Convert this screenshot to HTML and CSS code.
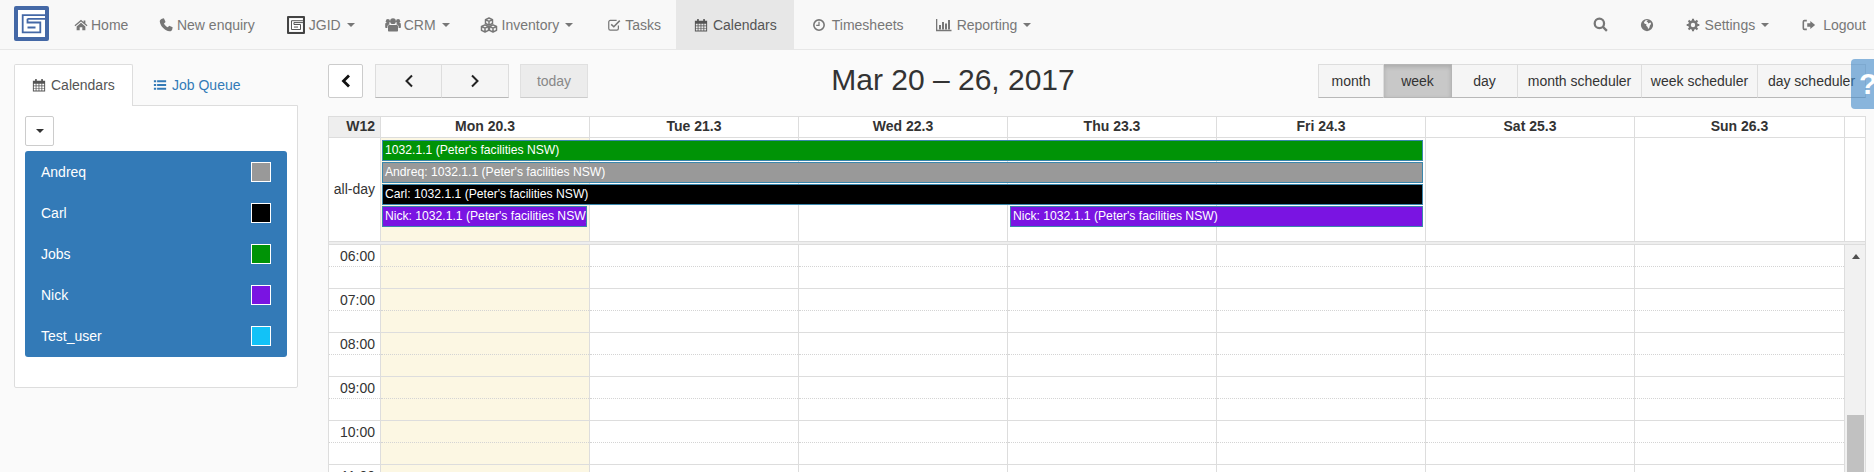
FILE: index.html
```html
<!DOCTYPE html>
<html lang="en">
<head>
<meta charset="utf-8">
<title>Calendars</title>
<link rel="stylesheet" href="styles.css">
</head>
<body>
<svg class="defs" xmlns="http://www.w3.org/2000/svg">
  <symbol id="i-home" viewBox="0 0 16 16"><path d="M8 2 .6 8.3l.9 1L8 3.9l6.500 5.400.9-1L13 6.200V2.800h-2v1.700z"/><path d="M3 9.600 8 5.500l5 4.100V14H9.500v-3.500h-3V14H3z"/></symbol>
  <symbol id="i-phone" viewBox="0 0 16 16"><path d="M3.400.8 5.600.3 7.500 4.600 5.700 6.200C6.500 8 8.300 9.900 10.100 10.600l1.500-1.700 4 1.800-.5 2.500c-.4 1.500-1.700 2.200-3 2-5.500-.8-10.200-5.500-11.200-11C.7 2.700 1.800 1.300 3.400.8z"/></symbol>
  <symbol id="i-users" viewBox="0 0 16 16"><circle cx="8" cy="4.200" r="2.900"/><circle cx="2.900" cy="4.200" r="2.100"/><circle cx="13.100" cy="4.200" r="2.100"/><path d="M4.300 8h7.400c.8 0 1.300.6 1.300 1.400V13.500c0 .6-.4 1-1 1H4c-.6 0-1-.4-1-1V9.400C3 8.600 3.500 8 4.300 8z"/><path d="M.2 7c0-.6.5-.9 1-.9h2.900c.2.5.5.8.8 1.100-1.200.2-2.500.9-2.500 2.300v1.500H1c-.5 0-.8-.3-.8-.8zM15.800 7c0-.6-.5-.9-1-.9h-2.900c-.2.500-.5.800-.8 1.100 1.200.2 2.500.9 2.500 2.300v1.500h1.500c.5 0 .8-.3.800-.8z"/></symbol>
  <symbol id="i-cubes" viewBox="0 0 18 16"><path class="cube" d="M9 1 12.500 2.700V6.500L9 8.200 5.500 6.500V2.700zM5.500 2.700 9 4.400l3.500-1.700M9 4.400v3.800"/><path class="cube" d="M5 7.800 8.500 9.500v3.800L5 15 1.500 13.300V9.500zM1.500 9.500 5 11.200l3.500-1.700M5 11.200V15"/><path class="cube" d="M13 7.800 16.500 9.500v3.800L13 15 9.500 13.300V9.500zM9.500 9.500 13 11.200l3.500-1.700M13 11.200V15"/></symbol>
  <symbol id="i-check" viewBox="0 0 16 16"><path class="line" d="M13 8.500V12a1.800 1.800 0 0 1-1.800 1.800H3.800A1.800 1.800 0 0 1 2 12V4.500a1.800 1.800 0 0 1 1.800-1.800H11"/><path class="line heavy" d="M4.800 7.200 7.800 10 14.600 3"/></symbol>
  <symbol id="i-cal" viewBox="0 0 16 16"><path d="M1 3h14v12.500H1zm1.100 3.600v1.900H4.200V6.600zm3 0v1.900h2.400V6.600zm3.300 0v1.900h2.400V6.600zm3.300 0v1.900h2.200V6.600zM2.100 9.300v2h2.100v-2zm3 0v2h2.400v-2zm3.300 0v2h2.400v-2zm3.300 0v2h2.200v-2zM2.100 12.100v2.300H4.200v-2.300zm3 0v2.300h2.400v-2.300zm3.300 0v2.300h2.400v-2.300zm3.300 0v2.300h2.200v-2.300z" fill-rule="evenodd"/><rect x="3.500" y="1" width="2" height="3.500" rx=".6"/><rect x="10.500" y="1" width="2" height="3.500" rx=".6"/></symbol>
  <symbol id="i-clock" viewBox="0 0 16 16"><circle class="line heavy" cx="8" cy="8" r="5.900"/><path class="line" d="M8 4.200V8.500H4.800"/></symbol>
  <symbol id="i-chart" viewBox="0 0 16 16"><path class="line" d="M.6 2v11.500H15.500"/><path d="M3 8h2v4.500H3zM6 5h2v7.500H6zM9 6.500h2v6H9zM12 3h2v9.500h-2z"/></symbol>
  <symbol id="i-search" viewBox="0 0 16 16"><circle class="line thick" cx="6.800" cy="6.800" r="5"/><path class="line thick" d="M10.300 10.300 14.800 14.800"/></symbol>
  <symbol id="i-globe" viewBox="0 0 16 16"><path fill-rule="evenodd" d="M8 1a7 7 0 1 1 0 14A7 7 0 0 1 8 1zm1 1.600L7.500 4.300l1.500.6.300 1.500 2-1 1-.2.300 1.600-1.300 1.800-.6 2.500-1.500 1.400-.5-2.300-1.600-1.400.3-1.600-2.100-.6-.8-1.700L6.500 2.500z"/></symbol>
  <symbol id="i-cog" viewBox="0 0 16 16"><circle class="line cogring" cx="8" cy="8" r="4"/><path class="line cogteeth" d="M8 .8v2.600M8 12.600v2.600M.8 8h2.600M12.600 8h2.600M2.900 2.900l1.900 1.900M11.200 11.200l1.900 1.900M2.900 13.100l1.900-1.900M11.200 4.800l1.900-1.900"/></symbol>
  <symbol id="i-logout" viewBox="0 0 16 16"><path class="line heavy" d="M5.500 3H2.800C2 3 1.500 3.500 1.500 4.300v7.400c0 .8.500 1.300 1.300 1.300h2.700"/><path d="M6 6h3.500V3.300L15 8l-5.500 4.700V10H6z"/></symbol>
  <symbol id="i-list" viewBox="0 0 16 16"><path d="M1 2.500h2.600v2.400H1zM4.700 2.500H15v2.400H4.700zM1 6.800h2.600v2.400H1zM4.700 6.800H15v2.400H4.700zM1 11.100h2.600v2.400H1zM4.700 11.100H15v2.400H4.700z"/></symbol>
  <symbol id="i-logo" viewBox="0 0 35 35"><rect class="logo-bg" width="35" height="35" rx="2"/><rect class="logo-in" x="4" y="4" width="27" height="27"/><path class="logo-line" d="M31 9.200H8.700V26.300H26.300V16.500H13.500V12.800M31 12.800H13.500M13.500 21.500H21.500"/></symbol>
</svg>

<nav class="navbar">
  <span class="brand"><svg class="logo"><use href="#i-logo"/></svg></span>
  <ul class="nav-items">
    <li class="nav-item nav-home"><svg class="ic ic-home"><use href="#i-home"/></svg>Home</li>
    <li class="nav-item nav-enq"><svg class="ic ic-phone"><use href="#i-phone"/></svg>New enquiry</li>
    <li class="nav-item"><svg class="ic ic-jgid"><use href="#i-logo"/></svg>JGID<span class="caret"></span></li>
    <li class="nav-item"><svg class="ic ic-users"><use href="#i-users"/></svg>CRM<span class="caret"></span></li>
    <li class="nav-item"><svg class="ic ic-cubes"><use href="#i-cubes"/></svg>Inventory<span class="caret"></span></li>
    <li class="nav-item nav-tasks"><svg class="ic ic-check"><use href="#i-check"/></svg>Tasks</li>
    <li class="nav-item active"><svg class="ic ic-cal"><use href="#i-cal"/></svg>Calendars</li>
    <li class="nav-item nav-time"><svg class="ic ic-clock"><use href="#i-clock"/></svg>Timesheets</li>
    <li class="nav-item nav-report"><svg class="ic ic-chart"><use href="#i-chart"/></svg>Reporting<span class="caret"></span></li>
  </ul>
  <ul class="nav-items nav-right">
    <li class="nav-item"><svg class="ic ic-search"><use href="#i-search"/></svg></li>
    <li class="nav-item nav-globe"><svg class="ic ic-globe"><use href="#i-globe"/></svg></li>
    <li class="nav-item nav-settings"><svg class="ic ic-cog"><use href="#i-cog"/></svg>Settings<span class="caret"></span></li>
    <li class="nav-item nav-logout"><svg class="ic ic-logout"><use href="#i-logout"/></svg>Logout</li>
  </ul>
</nav>

<main class="main">
  <aside class="sidebar">
    <div class="tabs">
      <div class="tab tab-on"><svg class="ic ic-cal"><use href="#i-cal"/></svg>Calendars</div>
      <div class="tab"><svg class="ic ic-list"><use href="#i-list"/></svg>Job Queue</div>
    </div>
    <div class="tab-panel">
      <button class="small-btn"><span class="caret caret-dark"></span></button>
      <ul class="cal-list">
        <li class="cal-row">Andreq<span class="swatch c-gray"></span></li>
        <li class="cal-row">Carl<span class="swatch c-black"></span></li>
        <li class="cal-row">Jobs<span class="swatch c-green"></span></li>
        <li class="cal-row">Nick<span class="swatch c-purple"></span></li>
        <li class="cal-row">Test_user<span class="swatch c-sky"></span></li>
      </ul>
    </div>
  </aside>

  <section class="calendar">
    <div class="toolbar">
      <div class="tool-left">
        <button class="btn btn-back"><svg class="chev chev-bold" viewBox="0 0 10 14"><path d="M8 1.500 2.500 7 8 12.500"/></svg></button>
        <div class="btn-group">
          <button class="btn btn-arrow"><svg class="chev" viewBox="0 0 10 14"><path d="M8 1.500 2.500 7 8 12.500"/></svg></button>
          <button class="btn btn-arrow"><svg class="chev" viewBox="0 0 10 14"><path d="M2 1.500 7.500 7 2 12.500"/></svg></button>
        </div>
        <button class="btn btn-today">today</button>
      </div>
      <h2 class="title">Mar 20 – 26, 2017</h2>
      <div class="btn-group">
        <button class="btn v-month">month</button>
        <button class="btn v-week btn-on">week</button>
        <button class="btn v-day">day</button>
        <button class="btn v-ms">month scheduler</button>
        <button class="btn v-ws">week scheduler</button>
        <button class="btn v-ds">day scheduler</button>
      </div>
    </div>

    <div class="grid-box">
      <div class="cols head-row">
        <div class="head-cell week-no">W12</div>
        <div class="head-cell">Mon 20.3</div>
        <div class="head-cell">Tue 21.3</div>
        <div class="head-cell">Wed 22.3</div>
        <div class="head-cell">Thu 23.3</div>
        <div class="head-cell">Fri 24.3</div>
        <div class="head-cell">Sat 25.3</div>
        <div class="head-cell">Sun 26.3</div>
        <div class="head-cell"></div>
      </div>
      <div class="cols allday">
        <div class="ad-label">all-day</div>
        <div class="ad-cell a2 today"></div>
        <div class="ad-cell a3"></div>
        <div class="ad-cell a4"></div>
        <div class="ad-cell a5"></div>
        <div class="ad-cell a6"></div>
        <div class="ad-cell a7"></div>
        <div class="ad-cell a8"></div>
        <div class="ad-cell a9"></div>
        <div class="event r1 span-all c-green">1032.1.1 (Peter's facilities NSW)</div>
        <div class="event r2 span-all c-gray">Andreq: 1032.1.1 (Peter's facilities NSW)</div>
        <div class="event r3 span-all c-black">Carl: 1032.1.1 (Peter's facilities NSW)</div>
        <div class="event r4 span-mon c-purple">Nick: 1032.1.1 (Peter's facilities NSW)</div>
        <div class="event r4 span-end c-purple">Nick: 1032.1.1 (Peter's facilities NSW)</div>
      </div>
      <div class="divider"></div>
      <div class="time-wrap">
        <div class="time-grid">
          <div class="cols-t slot"><div class="t-label">06:00</div><div class="t-cell today"></div><div class="t-cell"></div><div class="t-cell"></div><div class="t-cell"></div><div class="t-cell"></div><div class="t-cell"></div><div class="t-cell"></div></div>
          <div class="cols-t slot"><div class="t-label">07:00</div><div class="t-cell today"></div><div class="t-cell"></div><div class="t-cell"></div><div class="t-cell"></div><div class="t-cell"></div><div class="t-cell"></div><div class="t-cell"></div></div>
          <div class="cols-t slot"><div class="t-label">08:00</div><div class="t-cell today"></div><div class="t-cell"></div><div class="t-cell"></div><div class="t-cell"></div><div class="t-cell"></div><div class="t-cell"></div><div class="t-cell"></div></div>
          <div class="cols-t slot"><div class="t-label">09:00</div><div class="t-cell today"></div><div class="t-cell"></div><div class="t-cell"></div><div class="t-cell"></div><div class="t-cell"></div><div class="t-cell"></div><div class="t-cell"></div></div>
          <div class="cols-t slot"><div class="t-label">10:00</div><div class="t-cell today"></div><div class="t-cell"></div><div class="t-cell"></div><div class="t-cell"></div><div class="t-cell"></div><div class="t-cell"></div><div class="t-cell"></div></div>
          <div class="cols-t slot"><div class="t-label">11:00</div><div class="t-cell today"></div><div class="t-cell"></div><div class="t-cell"></div><div class="t-cell"></div><div class="t-cell"></div><div class="t-cell"></div><div class="t-cell"></div></div>
        </div>
        <div class="scrollbar"><span class="sb-arrow"></span><span class="sb-thumb"></span></div>
      </div>
    </div>
  </section>
</main>

<div class="help">?</div>
</body>
</html>
```

FILE: styles.css
```css
* { box-sizing: border-box; }
html, body { height: 100%; }
body {
  margin: 0;
  height: 472px;
  overflow: hidden;
  background: #fafafa;
  color: #333;
  font: 14px/20px "Liberation Sans", Arial, sans-serif;
}
ul { list-style: none; margin: 0; padding: 0; }
.defs { display: none; }

/* icons */
.ic { fill: currentColor; flex: none; width: 14px; height: 14px; margin-right: 3px; }
.line { fill: none; stroke: currentColor; stroke-width: 1.4; }
.heavy { stroke-width: 1.8; }
.thick { stroke-width: 2.4; }
.cube { fill: none; stroke: currentColor; stroke-width: 1.5; stroke-linejoin: round; }
.cogring { stroke-width: 3; }
.cogteeth { stroke-width: 2.4; }
.logo-bg { fill: var(--logo, #4468a6); }
.logo-in { fill: #fff; }
.logo-line { fill: none; stroke: var(--logo, #4468a6); stroke-width: 1.8; }

/* navbar */
.navbar {
  display: flex;
  height: 50px;
  padding-left: 14px;
  background: #f8f8f8;
  border-bottom: 1px solid #e7e7e7;
  color: #777;
}
.brand { display: flex; align-items: flex-start; padding-top: 6px; margin-right: 10px; }
.logo { width: 35px; height: 35px; }
.nav-items { display: flex; }
.nav-right { margin-left: auto; margin-right: -7px; }
.nav-item { display: flex; align-items: center; height: 49px; padding: 0 15px; white-space: nowrap; }
.nav-home { padding-right: 15.6px; }
.nav-enq { padding-right: 17px; }
.nav-tasks { padding-left: 19px; }
.active { background: #e7e7e7; color: #555; padding: 0 17px 0 18px; }
.active .ic { margin-right: 5px; }
.nav-time { padding-left: 18px; }
.nav-time .ic { margin-right: 6px; }
.nav-report { padding-left: 17px; }
.nav-globe { padding: 0 17px; }
.nav-settings { padding-right: 18px; }
.ic-phone { margin-right: 4px; }
.ic-jgid { width: 18px; height: 18px; margin-right: 4px; --logo: #444; }
.ic-users { width: 16px; height: 16px; }
.ic-cubes { width: 18px; height: 16px; margin-right: 4px; }
.ic-check { margin-right: 4px; }
.ic-chart { width: 16px; height: 16px; margin-right: 5px; }
.ic-search { width: 15px; height: 15px; margin: 0; }
.ic-globe { margin: 0; }
.ic-cog { margin-right: 5px; }
.ic-logout { margin-right: 7px; }
.caret {
  display: inline-block;
  width: 0;
  height: 0;
  margin-left: 6px;
  border-top: 4px solid currentColor;
  border-left: 4px solid transparent;
  border-right: 4px solid transparent;
}
.caret-dark { color: #333; margin: 0; }

/* layout */
.main { display: flex; padding: 14px 8px 0 14px; }
.sidebar { flex: none; width: 314px; }
.calendar { flex: none; width: 1538px; }

/* sidebar */
.tabs { display: flex; height: 41px; }
.tab { display: flex; align-items: center; padding: 0 15px 0 17px; color: #337ab7; }
.tab .ic { margin-right: 5px; }
.tab-on {
  width: 119px;
  padding-bottom: 2px;
  background: #fff;
  color: #555;
  border: 1px solid #ddd;
  border-bottom: 0;
  border-radius: 2px 2px 0 0;
  margin-right: 3px;
  position: relative;
  z-index: 1;
  margin-bottom: -1px;
}
.tab-panel {
  width: 284px;
  height: 283px;
  padding: 10px 10px 0;
  background: #fff;
  border: 1px solid #ddd;
  border-radius: 0 0 2px 2px;
}
.small-btn {
  display: flex;
  align-items: center;
  justify-content: center;
  width: 29px;
  height: 30px;
  padding: 0;
  margin-bottom: 5px;
  background: #fff;
  border: 1px solid #ccc;
  border-radius: 2px;
}
.cal-list { width: 262px; padding-bottom: 1px; background: #337ab7; border-radius: 3px; color: #fff; }
.cal-row { display: flex; align-items: center; justify-content: space-between; height: 41px; padding: 0 16px; }
.swatch { width: 20px; height: 20px; border: 1px solid #fff; }
.c-gray { background: #999; }
.c-black { background: #000; }
.c-green { background: #009306; }
.c-purple { background: #7a14e2; }
.c-sky { background: #12c2f7; }

/* toolbar */
.toolbar { display: flex; justify-content: space-between; align-items: center; height: 34px; margin-bottom: 18px; }
.tool-left { display: flex; }
.title { margin: 0; padding-bottom: 2px; font-size: 30px; line-height: 32px; font-weight: 400; color: #333; }
.btn-group { display: flex; }
.btn {
  height: 34px;
  padding: 0;
  font: 14px/20px "Liberation Sans", Arial, sans-serif;
  color: #333;
  background: #f5f5f5;
  border: 1px solid #ddd;
  border-bottom-color: #b8b8b8;
  border-left-width: 0;
}
.btn-group .btn:first-child { border-left-width: 1px; }
.btn-back {
  width: 35px;
  margin-right: 12px;
  background: #fff;
  border: 1px solid #ccc;
  border-radius: 2px;
}
.btn-arrow { width: 67px; }
.btn-today { width: 68px; margin-left: 11px; background: #ececec; color: #888; border: 1px solid #e0e0e0; border-bottom-color: #ccc; }
.btn-on { background: #c8c8c8; border-color: #b5b5b5; box-shadow: inset 0 2px 4px rgba(0, 0, 0, .15); }
.v-month { width: 66px; }
.v-week { width: 68px; }
.v-day { width: 66px; }
.v-ms { width: 124px; }
.v-ws { width: 116px; }
.v-ds { width: 108px; }
.chev { display: block; width: 10px; height: 14px; margin: 0 auto; fill: none; stroke: #222; stroke-width: 2; }
.chev-bold { stroke-width: 2.8; stroke: #111; }

/* grid */
.grid-box { background: #fff; border: 1px solid #ddd; border-bottom: 0; }
.cols { display: grid; grid-template-columns: 51px repeat(6, 209px) 210px 21px; }
.head-row { height: 21px; border-bottom: 1px solid #ddd; }
.head-cell { height: 20px; line-height: 19px; text-align: center; font-weight: 700; border-left: 1px solid #ddd; }
.head-cell:first-child { border-left: 0; }
.week-no { background: #eee; text-align: right; padding-right: 5px; }

.allday { grid-template-rows: 2px repeat(4, 22px) 13px; height: 103px; }
.ad-label { grid-column: 1; grid-row: 1 / -1; align-self: center; text-align: right; padding: 0 5px 2px 0; }
.ad-cell { grid-row: 1 / -1; border-left: 1px solid #ddd; }
.a2 { grid-column: 2; } .a3 { grid-column: 3; } .a4 { grid-column: 4; } .a5 { grid-column: 5; }
.a6 { grid-column: 6; } .a7 { grid-column: 7; } .a8 { grid-column: 8; } .a9 { grid-column: 9; }
.today { background: #fcf7e3; }
.event {
  height: 21px;
  padding: 0 2px;
  overflow: hidden;
  white-space: nowrap;
  color: #fff;
  font-size: 12.15px;
  line-height: 18px;
  border: 1px solid #3a87ad;
  margin-left: 2px;
}
.r1 { grid-row: 2; } .r2 { grid-row: 3; } .r3 { grid-row: 4; } .r4 { grid-row: 5; }
.span-all { grid-column: 2 / 7; margin-right: 2px; }
.span-mon { grid-column: 2; margin-right: 2px; }
.span-end { grid-column: 5 / 7; margin-left: 3px; margin-right: 2px; }

.divider { height: 4px; background: #eee; border-top: 1px solid #ddd; border-bottom: 1px solid #ddd; }
.time-wrap { display: flex; height: 240px; }
.time-grid { flex: 1; }
.cols-t { display: grid; grid-template-columns: 51px repeat(6, 209px) 210px; }
.slot { height: 44px; border-bottom: 1px solid #ddd; }
.t-label, .t-cell { position: relative; }
.t-label { text-align: right; padding-right: 5px; line-height: 22px; }
.t-cell { border-left: 1px solid #ddd; }
.t-label::after, .t-cell::after {
  content: "";
  position: absolute;
  top: 21px;
  left: 0;
  right: 0;
  border-top: 1px dotted #d4d4d4;
}
.scrollbar {
  flex: none;
  width: 21px;
  display: flex;
  flex-direction: column;
  align-items: center;
  padding: 9px 0 0 1px;
  background: #f1f1f1;
  border-left: 1px solid #ddd;
}
.sb-arrow { width: 0; height: 0; border-bottom: 5px solid #505050; border-left: 4px solid transparent; border-right: 4px solid transparent; }
.sb-thumb { width: 17px; flex: 1; margin-top: 156px; background: #c1c1c1; }

.help {
  position: absolute;
  top: 59px;
  right: 0;
  width: 23px;
  height: 50px;
  overflow: hidden;
  padding-left: 8px;
  background: rgba(62, 135, 200, .6);
  border-radius: 4px 0 0 4px;
  color: #fff;
  font-weight: 700;
  font-size: 30px;
  line-height: 50px;
}
```
